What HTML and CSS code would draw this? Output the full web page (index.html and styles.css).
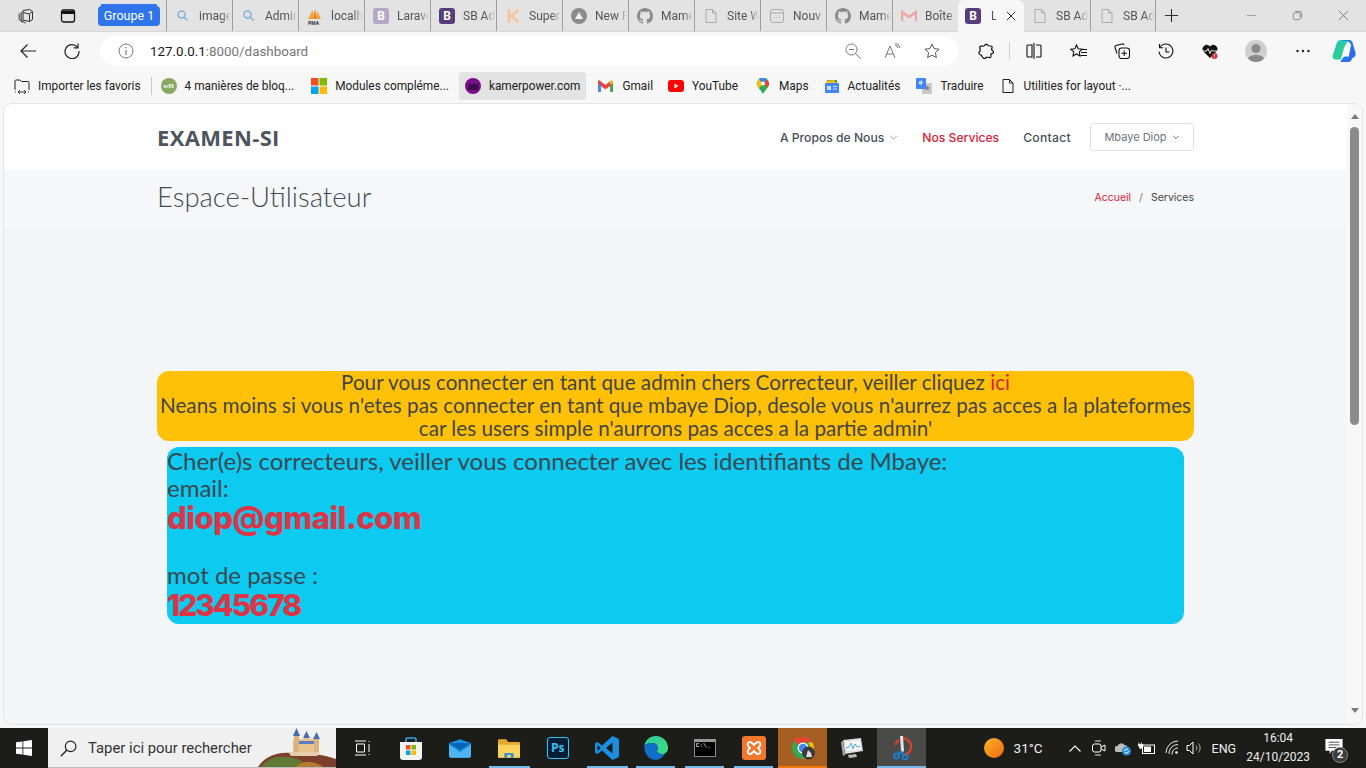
FILE: index.html
```html
<!DOCTYPE html>
<html lang="fr">
<head>
<meta charset="utf-8">
<title>Espace-Utilisateur</title>
<link rel="stylesheet" href="styles.css">
</head>
<body>
<svg class="defs" width="0" height="0" aria-hidden="true">
  <symbol id="doc" viewBox="0 0 16 16"><path d="M3 1.500h6.500L13 5v9.500H3z M9.500 1.500V5H13" fill="none" stroke="currentColor" stroke-width="1"/></symbol>
  <symbol id="gh" viewBox="0 0 16 16"><path fill="currentColor" d="M8 0C3.58 0 0 3.58 0 8c0 3.54 2.29 6.53 5.47 7.59.4.07.55-.17.55-.38 0-.19-.01-.82-.01-1.49-2.01.37-2.53-.49-2.69-.94-.09-.23-.48-.94-.82-1.13-.28-.15-.68-.52-.01-.53.63-.01 1.08.58 1.23.82.72 1.21 1.87.87 2.33.66.07-.52.28-.87.51-1.07-1.78-.2-3.64-.89-3.64-3.95 0-.87.31-1.59.82-2.15-.08-.2-.36-1.02.08-2.12 0 0 .67-.21 2.2.82.64-.18 1.32-.27 2-.27.68 0 1.36.09 2 .27 1.53-1.04 2.2-.82 2.2-.82.44 1.1.16 1.92.08 2.12.51.56.82 1.27.82 2.15 0 3.07-1.87 3.75-3.65 3.95.29.25.54.73.54 1.48 0 1.07-.01 1.93-.01 2.2 0 .21.15.46.55.38A8.013 8.013 0 0016 8c0-4.42-3.58-8-8-8z"/></symbol>
  <symbol id="search" viewBox="0 0 16 16"><circle cx="6.500" cy="6.500" r="3.500" fill="none" stroke="#7fb2de" stroke-width="1.500"/><path d="M9 9l3.500 3.500" stroke="#7fb2de" stroke-width="1.500"/></symbol>
</svg>

<div class="tabbar">
  <div class="win-btns">
    <svg class="ico16" viewBox="0 0 16 16"><path d="M5 2.500l6.500-1 3 2v8l-3 2-6.500-1.500z M3.200 4v8.500l4.500 2.500 M1.200 5.500v6l3.500 3" fill="none" stroke="#333" stroke-width="1"/><path d="M5 4.500l6.500 1.500 3-2.500M11.500 6v7.500" fill="none" stroke="#333" stroke-width="1"/></svg>
    <svg class="ico16" viewBox="0 0 16 16"><rect x="1.500" y="2" width="13" height="12" rx="2" fill="none" stroke="#111" stroke-width="1.300"/><path d="M1.500 4.500h13" stroke="#111" stroke-width="3"/></svg>
  </div>
  <div class="group-chip">Groupe 1</div>
  <div class="tabs">
    <div class="tab"><svg class="fav" viewBox="0 0 16 16"><use href="#search"/></svg><span class="tab-t">images</span></div>
    <div class="tab"><svg class="fav" viewBox="0 0 16 16"><use href="#search"/></svg><span class="tab-t">Admin</span></div>
    <div class="tab"><svg class="fav" viewBox="0 0 16 16"><path d="M1 11L5.500 2l1 5 1.500-6 1.500 6 1-4 3.500 8z" fill="#f3a13c"/><path d="M8 1l-1.500 10h3z" fill="#e7862a"/></svg><span class="pma">PMA</span><span class="tab-t">localhost</span></div>
    <div class="tab"><span class="bs bs-faded">B</span><span class="tab-t">Laravel</span></div>
    <div class="tab"><span class="bs">B</span><span class="tab-t">SB Admin</span></div>
    <div class="tab"><svg class="fav" viewBox="0 0 16 16"><path d="M4 1.500v13" stroke="#f6c79c" stroke-width="3"/><path d="M13.500 1.500L7 8l6.500 6.500" fill="none" stroke="#f6c79c" stroke-width="3"/></svg><span class="tab-t">Super</span></div>
    <div class="tab"><svg class="fav" viewBox="0 0 16 16"><circle cx="8" cy="8" r="8" fill="#8c8c8c"/><path d="M8 4l4 7H4z" fill="#f2f2f2"/></svg><span class="tab-t">New P</span></div>
    <div class="tab tab-gh"><svg class="fav"><use href="#gh"/></svg><span class="tab-t">Mame</span></div>
    <div class="tab tab-dc"><svg class="fav"><use href="#doc"/></svg><span class="tab-t">Site W</span></div>
    <div class="tab"><svg class="fav" viewBox="0 0 16 16"><rect x="1.500" y="1.500" width="13" height="13" rx="2.500" fill="none" stroke="#aaa"/><path d="M1.500 5h13M5 9.500h1M7.500 9.500h1M10 9.500h1" stroke="#aaa"/></svg><span class="tab-t">Nouv</span></div>
    <div class="tab tab-gh"><svg class="fav"><use href="#gh"/></svg><span class="tab-t">Mame</span></div>
    <div class="tab"><svg class="fav" viewBox="0 0 16 16"><path d="M1 13V4l7 5 7-5v9" fill="none" stroke="#e9a9a3" stroke-width="2.500"/></svg><span class="tab-t">Boîte</span></div>
    <div class="tab tab-active"><span class="bs">B</span><span class="tab-t tab-t-short">L</span><svg class="tab-x" viewBox="0 0 10 10"><path d="M1 1l8 8M9 1L1 9" stroke="#333" stroke-width="1"/></svg></div>
    <div class="tab tab-dc"><svg class="fav"><use href="#doc"/></svg><span class="tab-t">SB Ad</span></div>
    <div class="tab tab-dc tab-last"><svg class="fav"><use href="#doc"/></svg><span class="tab-t">SB Ad</span></div>
  </div>
  <svg class="plus" viewBox="0 0 16 16"><path d="M8 1v14M1 8h14" stroke="#333" stroke-width="1.200"/></svg>
  <div class="win-ctl">
    <svg class="ctl" viewBox="0 0 12 12"><path d="M1 6h10" stroke="#999" stroke-width="1"/></svg>
    <svg class="ctl" viewBox="0 0 12 12"><rect x="1.500" y="3" width="7.500" height="7.500" rx="1.500" fill="none" stroke="#888"/><path d="M3.500 1.500h5.500a1.500 1.500 0 011.500 1.500v5.500" fill="none" stroke="#888"/></svg>
    <svg class="ctl" viewBox="0 0 12 12"><path d="M1 1l10 10M11 1L1 11" stroke="#777" stroke-width="1"/></svg>
  </div>
</div>

<div class="toolbar">
  <svg class="tb-ico tb-back" viewBox="0 0 16 16"><path d="M16 8H1M7.500 1.500L1 8l6.500 6.500" fill="none" stroke="#222" stroke-width="1.200"/></svg>
  <svg class="tb-ico tb-reload" viewBox="0 0 16 16"><path d="M13.500 4.300A7 7 0 1015 8" fill="none" stroke="#222" stroke-width="1.200"/><path d="M14 .5v4.300H9.700" fill="none" stroke="#222" stroke-width="1.200"/></svg>
  <div class="address">
    <svg class="tb-ico addr-info" viewBox="0 0 16 16"><circle cx="8" cy="8" r="7" fill="none" stroke="#777" stroke-width="1"/><path d="M8 7v5" stroke="#777" stroke-width="1.200"/><circle cx="8" cy="4.800" r=".8" fill="#777"/></svg>
    <div class="url"><span class="url-host">127.0.0.1</span>:8000/dashboard</div>
    <svg class="tb-ico addr-zoom" viewBox="0 0 16 16"><circle cx="6.500" cy="6.500" r="5.500" fill="none" stroke="#777"/><path d="M10.500 10.500l5 5M4 6.500h5" stroke="#777"/></svg>
    <svg class="tb-ico addr-read" viewBox="0 0 16 16"><path d="M0 15L5 3l5 12M2 11h6" fill="none" stroke="#777"/><path d="M10 2a4 4 0 013 3M10 0a6 6 0 015 5" fill="none" stroke="#777"/></svg>
    <svg class="tb-ico addr-star" viewBox="0 0 16 16"><path d="M8 1l2.100 4.600 5 .6-3.700 3.400 1 5L8 12.100l-4.400 2.500 1-5L.9 6.200l5-.6z" fill="none" stroke="#555"/></svg>
  </div>
  <svg class="tb-ico tb-ext" viewBox="0 0 16 16"><path d="M6.500 2.500a2 2 0 013.500 0c.5 1 3.500 0 4 1s-.5 2.500-.5 3 2.500 1.500 2 3-2 1-2.500 1.500.5 3-.5 3.500-3-.5-3.500-.5-1.500 1.500-3 1.500S4 13 3.500 12.500 .8 11.500 .8 10s1.500-1.500 1.500-2.500S1 4.500 2 3.500s3.500 .5 4.500-1z" fill="none" stroke="#111" stroke-width="1.200"/></svg>
  <span class="tb-sep"></span>
  <svg class="tb-ico tb-split" viewBox="0 0 16 16"><path d="M6 2H2a1 1 0 00-1 1v10a1 1 0 001 1h4zM10 2h4a1 1 0 011 1v10a1 1 0 01-1 1h-4M8 0v16" fill="none" stroke="#111" stroke-width="1.100"/></svg>
  <svg class="tb-ico tb-fav" viewBox="0 0 17 16"><path d="M6.500 2l1.700 3.700 4 .5-3 2.700.8 4-3.500-2-3.500 2 .8-4-3-2.700 4-.5z" fill="none" stroke="#111" stroke-width="1.100"/><path d="M12 6.500h5M11 9.500h6M10.500 12.500h6.500" stroke="#111"/></svg>
  <svg class="tb-ico tb-col" viewBox="0 0 16 16"><path d="M3 10.500L1 4.500a1.500 1.500 0 011-2l6-1.500a1.500 1.500 0 012 1" fill="none" stroke="#111" stroke-width="1.100"/><rect x="5" y="5" width="10.500" height="10.500" rx="2.500" fill="none" stroke="#111" stroke-width="1.100"/><path d="M10.200 7.500v5.500M7.500 10.200h5.500" stroke="#111" stroke-width="1.100"/></svg>
  <svg class="tb-ico tb-hist" viewBox="0 0 16 16"><path d="M1.800 4.500A7 7 0 118.500 15 7 7 0 011 8.500" fill="none" stroke="#111" stroke-width="1.100"/><path d="M1.500 1v3.800h3.800M8 4.500V9h3.500" fill="none" stroke="#111" stroke-width="1.100"/></svg>
  <svg class="tb-ico tb-heart" viewBox="0 0 16 16"><path d="M8 15L1.500 8.500A4 4 0 018 3.500a4 4 0 016.500 5z" fill="#111"/><path d="M0 8h4.500l1.500-2.500 2 5 1.500-3.500 1 1H16" fill="none" stroke="#fff" stroke-width=".9"/><circle cx="12.500" cy="13" r="3" fill="#d13438"/><path d="M12.500 11.300v2M12.500 14v.6" stroke="#fff" stroke-width=".8"/></svg>
  <div class="avatar"><svg viewBox="0 0 22 22"><circle cx="11" cy="8.500" r="4.500" fill="#8a8a8a"/><path d="M3 22v-2.500c0-3 3.500-4.500 8-4.500s8 1.500 8 4.500V22z" fill="#8a8a8a"/></svg></div>
  <svg class="tb-ico tb-dots" viewBox="0 0 16 16"><circle cx="2.500" cy="8" r="1.200" fill="#222"/><circle cx="8" cy="8" r="1.200" fill="#222"/><circle cx="13.500" cy="8" r="1.200" fill="#222"/></svg>
  <svg class="copilot" viewBox="0 0 24 24"><defs><linearGradient id="cp1" x1="0" y1="0" x2="1" y2="1"><stop offset="0" stop-color="#1dc7c2"/><stop offset="1" stop-color="#3ccf7a"/></linearGradient><linearGradient id="cp2" x1="0" y1="0" x2="1" y2="1"><stop offset="0" stop-color="#0e8ff0"/><stop offset="1" stop-color="#3a5ff0"/></linearGradient></defs><path d="M9 1h8c2.500 0 3 1 4 4l2.500 9c.6 2.500-1 5-4 5h-3L19 6c-.6-2-2-3.500-4-3.500H9z" fill="url(#cp2)"/><path d="M9 1C6 1 5 3 4.500 5L.8 16c-.8 2.500.7 4.500 3 4.500h5L12 9c.6-2 2-3.500 3.500-6.500z" fill="url(#cp1)"/><path d="M8 23h8c2.500 0 3.500-1.500 4.500-4.500l.8-3c-1 1.500-2.500 2-4 2h-4c-2 0-3 2-5 5.500z" fill="url(#cp2)"/></svg>
</div>

<div class="bookmarks">
  <div class="bm"><svg class="bm-ico" viewBox="0 0 16 16"><path d="M1 12V3a1 1 0 011-1h4l1.500 1.500H14a1 1 0 011 1V12" fill="none" stroke="#222"/><path d="M4.500 14h7M1 14h1M14 14h1M6 12l-2 2 2 2M10 12l2 2-2 2" fill="none" stroke="#222" stroke-width=".9"/></svg>Importer les favoris</div>
  <span class="bm-sep"></span>
  <div class="bm"><span class="wh">wH</span>4 manières de bloq...</div>
  <div class="bm bm-item-ms"><svg class="bm-ico" viewBox="0 0 16 16"><rect width="7.500" height="7.500" fill="#f25022"/><rect x="8.500" width="7.500" height="7.500" fill="#7fba00"/><rect y="8.500" width="7.500" height="7.500" fill="#00a4ef"/><rect x="8.500" y="8.500" width="7.500" height="7.500" fill="#ffb900"/></svg>Modules compléme...</div>
  <div class="bm bm-active"><svg class="bm-ico" viewBox="0 0 16 16"><circle cx="8" cy="8" r="8" fill="#7a0f8c"/><path d="M3 12V7l2-2 2 2 2-2 2 2 2-2v7z" fill="#3d0a50"/></svg>kamerpower.com</div>
  <div class="bm bm-item-gm"><svg class="bm-ico bm-gmail" viewBox="0 0 16 12"><path d="M0 12V2l8 5.500L16 2v10h-3V6L8 9.500 3 6v6z" fill="#ea4335"/><path d="M0 2.500V12h3V5z" fill="#4285f4"/><path d="M16 2.500V12h-3V5z" fill="#34a853"/><path d="M13 5l3-2.500V1c0-1-1-1.300-2-.7L13 1z" fill="#fbbc04"/><path d="M3 5L0 2.500V1c0-1 1-1.300 2-.7L8 5l5-4v4L8 9z" fill="#ea4335"/></svg>Gmail</div>
  <div class="bm bm-item-yt"><svg class="bm-ico" viewBox="0 0 16 12"><rect width="16" height="12" rx="3" fill="#f00"/><path d="M6.500 3.500v5l4-2.500z" fill="#fff"/></svg>YouTube</div>
  <div class="bm bm-item-map"><svg class="bm-ico bm-maps" viewBox="0 0 12 16"><path d="M6 16C4 12 0 9.500 0 5.500a6 6 0 0112 0C12 9.500 8 12 6 16z" fill="#34a853"/><path d="M0 5.500a6 6 0 012-4.400l4 4.400-4 4.700C1 8.800 0 7.400 0 5.500z" fill="#fbbc04"/><path d="M2 1.100A6 6 0 016 0c1.500 0 3 .6 4 1.700L6 5.500z" fill="#4285f4"/><path d="M10 1.700c1.200 1 2 2.300 2 3.800 0 1.500-.8 3-1.600 4L6 5.500z" fill="#ea4335"/><circle cx="6" cy="5.500" r="2.100" fill="#fff"/></svg>Maps</div>
  <div class="bm"><svg class="bm-ico" viewBox="0 0 16 16"><path d="M3 2h10v5H3z" fill="#34a853"/><path d="M2 3l8-1 3 4H3z" fill="#fbbc04"/><rect x="1" y="5" width="14" height="10" rx="1" fill="#4285f4"/><rect x="3" y="8" width="4" height="4" fill="#cfe0fb"/><path d="M9 8.500h4M9 11h4" stroke="#cfe0fb"/></svg>Actualités</div>
  <div class="bm"><svg class="bm-ico" viewBox="0 0 16 16"><rect x="6" y="5" width="10" height="11" fill="#c9c9c9"/><path d="M11 7l1 2h2l-1.500 1.500.5 2-2-1-2 1 .5-2L8 9h2z" fill="#888"/><rect width="10" height="11" rx="1" fill="#4285f4"/><path d="M7 4H5v1.500h1a1.500 1.500 0 11-.5-2.200" fill="none" stroke="#fff"/></svg>Traduire</div>
  <div class="bm"><svg class="bm-ico bm-doc"><use href="#doc"/></svg>Utilities for layout ·...</div>
</div>

<div class="viewport">
  <div class="page">
    <header class="site-head">
      <div class="container head-row">
        <div class="brand">EXAMEN-SI</div>
        <nav class="nav">
          <a class="nav-link">A Propos de Nous <svg class="chev-thin" viewBox="0 0 10 6"><path d="M1 1l4 4 4-4" fill="none" stroke="#777" stroke-width=".8"/></svg></a>
          <a class="nav-link nav-red">Nos Services</a>
          <a class="nav-link nav-contact">Contact</a>
          <button class="user-btn">Mbaye Diop <svg class="chev" viewBox="0 0 10 6"><path d="M1.500 1l3.500 3.500L8.500 1" fill="none" stroke="#555" stroke-width="1.100"/></svg></button>
        </nav>
      </div>
    </header>
    <section class="crumbs">
      <div class="container crumb-row">
        <h1 class="crumb-title">Espace-Utilisateur</h1>
        <div class="crumb-path"><a class="crumb-link">Accueil</a><span class="crumb-sl">/</span><span>Services</span></div>
      </div>
    </section>
    <main class="main container">
      <div class="notice">
        Pour vous connecter en tant que admin chers Correcteur, veiller cliquez <a class="notice-link">ici</a><br>
        Neans moins si vous n'etes pas connecter en tant que mbaye Diop, desole vous n'aurrez pas acces a la plateformes<br>
        car les users simple n'aurrons pas acces a la partie admin'
      </div>
      <div class="creds">
        <div class="creds-line">Cher(e)s correcteurs, veiller vous connecter avec les identifiants de Mbaye:</div>
        <div class="creds-line">email:</div>
        <div class="creds-value">diop@gmail.com</div>
        <div class="creds-line creds-gap">mot de passe :</div>
        <div class="creds-value creds-last">12345678</div>
      </div>
    </main>
  </div>
  <div class="scrollbar">
    <span class="sb-up"></span>
    <span class="sb-thumb"></span>
    <span class="sb-down"></span>
  </div>
</div>

<div class="taskbar">
  <div class="start"><svg viewBox="0 0 16 16"><path d="M0 2.300l6.500-.9v6.200H0zM7.300 1.300L16 0v7.600H7.300zM0 8.400h6.500v6.200L0 13.700zM7.300 8.400H16V16l-8.700-1.200z" fill="#fff"/></svg></div>
  <div class="task-search">
    <svg class="ts-ico" viewBox="0 0 16 16"><circle cx="10" cy="6" r="5" fill="none" stroke="#222" stroke-width="1.100"/><path d="M6.500 9.500L.8 15.200" stroke="#222" stroke-width="1.300"/></svg>
    <span class="ts-text">Taper ici pour rechercher</span>
    <svg class="castle" viewBox="0 0 78 40"><path d="M0 40c5-8 14-13 24-14 14-1 38 0 54 6v8z" fill="#7d3f2c"/><path d="M3 40c6-8 14-11 24-10 8 0 14 2 18 5-4 1-6 3-8 5z" fill="#5f7a34"/><path d="M37 40c4-4 10-6 16-5 6 1 10 3 12 5z" fill="#b5792f"/><path d="M30 25h32l-3 4H33z" fill="#e8cdaa"/><rect x="35" y="12" width="24" height="13" fill="#e6c48f"/><rect x="36" y="9" width="5" height="16" fill="#d9b27c"/><rect x="46" y="11" width="5" height="14" fill="#e6c48f"/><rect x="56" y="12" width="5" height="13" fill="#d9b27c"/><path d="M35 9l3.500-8 3.500 8zM45 11l3.500-7 3.500 7zM55 12l3.500-7 3.500 7z" fill="#4a6bb0"/><rect x="41" y="14" width="15" height="3" fill="#5a7cc0"/></svg>
  </div>
  <div class="task-apps">
    <div class="tk"><svg class="tk-i" viewBox="0 0 16 16"><path d="M1 1h11M1 15h11M2.500 4h8v8h-8zM15 1v1M15 4v8M15 14v1" fill="none" stroke="#fff"/></svg></div>
    <div class="tk"><svg class="tk-store" viewBox="0 0 24 24"><path d="M7 8V3.500C7 2.500 8 2 9 2h6c1 0 2 .5 2 1.500V8" fill="none" stroke="#29a8e8" stroke-width="1.600"/><path d="M1 6h22v15a3 3 0 01-3 3H4a3 3 0 01-3-3z" fill="#f4f4f4"/><rect x="7" y="9" width="4.500" height="4.500" fill="#f25022"/><rect x="12.500" y="9" width="4.500" height="4.500" fill="#7fba00"/><rect x="7" y="14.500" width="4.500" height="4.500" fill="#00a4ef"/><rect x="12.500" y="14.500" width="4.500" height="4.500" fill="#ffb900"/></svg></div>
    <div class="tk"><svg class="tk-mail" viewBox="0 0 24 20"><path d="M0 4L12 0l12 4v14a2 2 0 01-2 2H2a2 2 0 01-2-2z" fill="#1a8ee1"/><path d="M0 4l12 8 12-8" fill="#0a64b4"/><path d="M0 6l12 8 12-8v12a2 2 0 01-2 2H2a2 2 0 01-2-2z" fill="#50b4f0"/></svg></div>
    <div class="tk tk-on tk-on-split"><svg class="tk-mail" viewBox="0 0 24 20"><path d="M1 0h8l2 3h12a1 1 0 011 1v15a1 1 0 01-1 1H1a1 1 0 01-1-1V1a1 1 0 011-1z" fill="#e5a92e"/><path d="M0 6h24v13a1 1 0 01-1 1H1a1 1 0 01-1-1z" fill="#fcd55f"/><path d="M7 15h10v5H7z" fill="#2a8fd8"/><rect x="10" y="17" width="4" height="3" fill="#fcd55f"/></svg></div>
    <div class="tk"><span class="ps">Ps</span></div>
    <div class="tk tk-on tk-on-split"><svg class="tk-i22" viewBox="0 0 24 24"><path d="M17.500 0L24 3v18l-6.500 3L7 14.500 2.500 18 0 16.800V7.200L2.500 6 7 9.500zM17.500 6.500L11 12l6.500 5.500zM2.500 9v6l3-3z" fill="#1b8ee0"/></svg></div>
    <div class="tk tk-on"><svg class="tk-i24" viewBox="0 0 24 24"><defs><linearGradient id="edge1" x1="0" y1="0" x2="1" y2="1"><stop offset="0" stop-color="#2fc7a0"/><stop offset="1" stop-color="#3fe07c"/></linearGradient></defs><path d="M12 0a12 12 0 0112 12c0 4-3 6-6 6-3 0-5-1.500-5-3 0-1 1-1 1-3 0-3-3-5-6-5C4 7 1 9 .3 10 1 4 6 0 12 0z" fill="url(#edge1)"/><path d="M.3 10C2 7.500 5 7 8 7c3 0 6 2 6 5 0 2-1 2-1 3 0 1.500 2 3 5 3 1 0 2 0 3-.5A12 12 0 0112 24C5 24 0 18 .3 10z" fill="#0f6fc6"/></svg></div>
    <div class="tk tk-on"><div class="cmd"><span class="cmd-t">C:\_</span></div></div>
    <div class="tk tk-on"><div class="xampp"><svg viewBox="0 0 16 16"><path d="M4 2c2 0 3 2 4 3 1-1 2-3 4-3s3 2 2 4l-2 2 2 2c1 2 0 4-2 4s-3-2-4-3c-1 1-2 3-4 3s-3-2-2-4l2-2-2-2c-1-2 0-4 2-4z" fill="none" stroke="#fff" stroke-width="1.800"/></svg></div></div>
    <div class="tk tk-chrome"><svg class="tk-i24" viewBox="0 0 24 24"><circle cx="12" cy="12" r="11" fill="#34a853"/><path d="M12 1a11 11 0 019.500 5.500H12a5.500 5.500 0 00-5 3L3 4a11 11 0 019-3z" fill="#ea4335"/><path d="M21.500 6.500A11 11 0 0112 23l5-8.500a5.500 5.500 0 000-8z" fill="#fbbc04"/><circle cx="12" cy="12" r="5.500" fill="#fff"/><circle cx="12" cy="12" r="4.200" fill="#4285f4"/><circle cx="17.500" cy="17" r="6.500" fill="#3a3a3a"/><path d="M15 21l2-7 3 3 1 4z" fill="#ddd"/></svg></div>
    <div class="tk"><svg class="tk-i24" viewBox="0 0 24 24"><path d="M3 4l18-2 2 13-18 3z" fill="#dcdcdc"/><path d="M5 5.500l15-1.500 1.500 9.500-15 2z" fill="#f5f5f5"/><path d="M6 12l3-1 2-4 2 6 2-5 2 3 3-.5" fill="none" stroke="#4aa3df" stroke-width=".9"/><path d="M1 6l2-1 2 14-2 1z" fill="#aaa"/><path d="M8 19l8-1 1 3-8 1z" fill="#bbb"/></svg></div>
    <div class="tk tk-snip"><svg class="tk-i24" viewBox="0 0 24 24"><path d="M14 2a9 9 0 018 10 9 9 0 01-7 7" fill="none" stroke="#d8402a" stroke-width="2.500"/><path d="M10 4a9 9 0 00-4 5" fill="none" stroke="#d8402a" stroke-width="2.500"/><path d="M11 0l3 0 1 15-2 2-1-2z" fill="#e2e2e2"/><circle cx="7.500" cy="20" r="2.500" fill="none" stroke="#1b7fd0" stroke-width="2"/><circle cx="16" cy="21" r="2.500" fill="none" stroke="#1b7fd0" stroke-width="2"/><path d="M9 18l3-3M14 19l-2-4" stroke="#1b7fd0" stroke-width="1.800"/></svg></div>
  </div>
  <div class="tray">
    <span class="sun"></span>
    <span class="temp">31°C</span>
    <svg class="tr-chev" viewBox="0 0 12 7"><path d="M.5 6.500L6 1l5.500 5.500" fill="none" stroke="#fff" stroke-width="1.100"/></svg>
    <svg class="tr-i tr-vid" viewBox="0 0 14 16"><path d="M3 1h6M3 15h6" stroke="#ddd"/><rect x=".5" y="4" width="8.500" height="8" rx="2" fill="none" stroke="#fff"/><path d="M9 7l4-2v6l-4-2" fill="none" stroke="#fff"/></svg>
    <svg class="tr-i tr-cloud" viewBox="0 0 16 16"><path d="M2 12a3 3 0 01.5-6 4 4 0 017-1 3 3 0 013 4v3z" fill="#bbb"/><circle cx="11.500" cy="11" r="4.500" fill="#2a8fe0"/><path d="M9.500 11a2 2 0 013.500-1.300M13.500 11A2 2 0 0110 12.300" fill="none" stroke="#fff"/></svg>
    <svg class="tr-i tr-batt" viewBox="0 0 18 14"><rect x="4.500" y="4" width="12" height="8.500" fill="none" stroke="#fff"/><rect x="6" y="5.500" width="7" height="5.500" fill="#fff"/><path d="M1 1.500v2M3.500 1.500v2M0 3.500h5v2L2.500 8z" stroke="#fff" fill="#fff" stroke-width=".8"/></svg>
    <svg class="tr-i tr-wifi" viewBox="0 0 16 16"><path d="M1 13A12 12 0 0113 1M4 14a9 9 0 019-9.500M7 14.500A6 6 0 0113 8" fill="none" stroke="#fff" stroke-width=".9"/><circle cx="11.500" cy="12.500" r="1.300" fill="#fff"/></svg>
    <svg class="tr-i tr-spk" viewBox="0 0 16 16"><path d="M1 5.500h2.500L7 2v12l-3.500-3.500H1z" fill="none" stroke="#fff"/><path d="M10 5.500a4 4 0 010 5M12.500 3.500a7 7 0 010 9" fill="none" stroke="#aaa"/></svg>
    <span class="lang">ENG</span>
    <div class="clock"><span>16:04</span><span>24/10/2023</span></div>
    <div class="notif"><svg viewBox="0 0 16 14"><path d="M0 0h16v11H6l-2 3v-3H0z" fill="#fff"/><path d="M3 3h10M3 5.500h10M3 8h7" stroke="#333" stroke-width=".8"/></svg><span class="notif-n">2</span></div>
  </div>
</div>
</body>
</html>
```

FILE: styles.css
```css
* { box-sizing: border-box; }
html, body { margin: 0; padding: 0; }
body {
  width: 1366px; height: 768px; overflow: hidden;
  display: flex; flex-direction: column;
  font-family: Roboto, "Liberation Sans", sans-serif;
  background: #f7f7f7;
}
.defs { position: absolute; }
svg { display: block; flex: none; }

/* tab strip */
.tabbar { height: 32px; background: #e3e3e3; display: flex; align-items: center; border-bottom: 1px solid #d6d6d6; }
.win-btns { display: flex; gap: 26px; padding-left: 18px; width: 98px; }
.ico16 { width: 16px; height: 16px; }
.group-chip {
  width: 62px; height: 20px; background: #2f74eb; color: #fff; font-size: 12.5px;
  line-height: 20px; text-align: center; border-radius: 4px; box-shadow: 0 -5px 0 -3px #2f74eb; margin-right: 6px;
}
.tabs { display: flex; height: 31px; }
.tab { width: 66px; height: 31px; display: flex; align-items: center; padding-left: 8px; border-left: 1px solid #a0a0a0; position: relative; overflow: hidden; color: #555; font-size: 12px; }
.tab-last { border-right: 1px solid #a0a0a0; }
.fav { width: 16px; height: 16px; margin-right: 8px; }
.tab-gh { color: #8c8c8c; }
.tab-dc { color: #aaa; }
.tab-t { color: #555; white-space: nowrap; width: 32px; overflow: hidden; -webkit-mask-image: linear-gradient(90deg, #000 70%, transparent); mask-image: linear-gradient(90deg, #000 70%, transparent); }
.tab-t-short { width: auto; }
.pma { position: absolute; left: 9px; top: 20px; font-size: 5px; font-weight: 700; color: #334; }
.bs { width: 16px; height: 16px; border-radius: 3px; background: #563d7c; color: #fff; font-size: 12px; font-weight: 700; line-height: 16px; text-align: center; margin-right: 8px; flex: none; }
.bs-faded { background: #b3a8c6; }
.tab-active { background: #f7f7f7; border-left: 0; border-radius: 6px 6px 0 0; height: 32px; padding-left: 7px; margin-bottom: -1px; }
.tab-active .bs { margin-right: 10px; }
.tab-active + .tab { border-left: 0; }
.tab-x { width: 10px; height: 10px; margin-left: 9px; }
.plus { width: 15px; height: 15px; margin-left: 8px; }
.win-ctl { display: flex; margin-left: auto; padding-right: 17px; gap: 35px; }
.ctl { width: 11px; height: 11px; }

/* toolbar */
.toolbar { height: 39px; display: flex; align-items: center; padding: 0 0 1px 20px; background: #f7f7f7; }
.tb-ico { width: 16px; height: 16px; }
.tb-reload { margin-left: 28px; }
.address { width: 858px; height: 30px; margin-left: 20px; background: #fff; border-radius: 15px; display: flex; align-items: center; padding-left: 18px; }
.url { margin-left: 16px; font-size: 13.4px; color: #767676; width: 695px; white-space: nowrap; }
.url-host { color: #1a1a1a; }
.addr-read { margin-left: 24px; }
.addr-star { margin-left: 23px; }
.tb-ext { margin-left: 20px; }
.tb-sep { width: 1px; height: 18px; background: #cfcfcf; margin-left: 15px; }
.tb-split { margin-left: 16px; }
.tb-fav { margin-left: 28px; width: 17px; }
.tb-col { margin-left: 27px; }
.tb-hist { margin-left: 28px; }
.tb-heart { margin-left: 28px; }
.avatar { width: 22px; height: 22px; border-radius: 50%; background: #cfcfcf; overflow: hidden; margin-left: 27px; }
.tb-dots { margin-left: 28px; }
.copilot { width: 24px; height: 24px; margin-left: 21px; }

/* bookmarks */
.bookmarks { height: 33px; display: flex; align-items: center; gap: 4px; padding: 0 0 3px 8px; background: #f7f7f7; }
.bm { height: 28px; display: flex; align-items: center; padding: 0 6px; font-size: 11.85px; color: #222; white-space: nowrap; border-radius: 4px; }
.bm-ico { width: 16px; height: 16px; margin-right: 8px; }
.bm-gmail { width: 15px; height: 12px; margin-right: 9px; }
.bm-maps { width: 14px; height: 16px; margin-right: 9px; }
.bm-doc { width: 16px; height: 18px; margin-right: 8px; color: #222; }
.bm-item-ms { margin-left: 1px; }
.bm-item-gm { margin-left: 2px; padding-right: 5px; }
.bm-item-yt { padding-right: 8px; }
.bm-item-map { padding-right: 5px; }
.bm-active { background: #e3e3e3; }
.bm-sep { width: 1px; height: 18px; background: #c8c8c8; margin-right: -1px; }
.wh { width: 16px; height: 16px; border-radius: 50%; background: #86a95f; color: #fff; font: 700 7px/16px "Liberation Serif", serif; text-align: center; margin-right: 8px; }

/* browser viewport */
.viewport { width: 1358px; margin-left: 4px; height: 620px; display: flex; background: #f3f5f7; border-radius: 8px; overflow: hidden; box-shadow: 0 0 0 1px #e4e4e4; }
.page { width: 1343px; display: flex; flex-direction: column; }
.container { width: 1037px; margin-left: 153px; }
.site-head { height: 66px; background: #fff; }
.head-row { height: 66px; display: flex; align-items: center; justify-content: space-between; }
.brand { font: 700 22px "Open Sans", sans-serif; color: #4e555c; letter-spacing: .35px; }
.nav { display: flex; align-items: center; gap: 24px; }
.nav-link { font: 500 12.15px Inter, sans-serif; color: #46505a; display: flex; align-items: center; gap: 5px; white-space: nowrap; }
.nav-red { color: #dc2035; }
.nav-contact { letter-spacing: .3px; }
.chev-thin { width: 9px; height: 5px; }
.user-btn { width: 104px; height: 28px; margin-left: -5px; border: 1px solid #dee2e6; border-radius: 4px; background: #fff; font: 400 11px Inter, sans-serif; color: #6c757d; display: flex; align-items: center; justify-content: center; gap: 5px; }
.chev { width: 8px; height: 5px; }
.crumbs { height: 57px; background: #f6f7f9; }
.crumb-row { height: 57px; display: flex; align-items: center; justify-content: space-between; }
.crumb-title { margin: 0 0 4px; font: 300 27.5px Lato, sans-serif; color: #444b52; }
.crumb-path { font: 400 10.5px Inter, sans-serif; color: #444; display: flex; gap: 8px; margin-bottom: 2px; }
.crumb-link { color: #dc2035; }
.crumb-sl { color: #777; }
.main { padding-top: 144px; }
.notice { height: 70px; background: #ffc107; border-radius: 12px; text-align: center; font: 400 20.7px/23px Lato, sans-serif; color: #444; white-space: nowrap; }
.notice-link { color: #dc2035; }
.creds { margin: 6px 10px 0; height: 177px; background: #0dcaf0; border-radius: 12px; color: #3a4750; overflow: hidden; }
.creds-line { font: 400 24px/27px Lato, sans-serif; white-space: nowrap; }
.creds-value { font: 800 31px/34px Inter, sans-serif; color: #dc3545; letter-spacing: -.5px; }
.creds-gap { margin-top: 26px; }
.creds-last { font-size: 30px; line-height: 34px; letter-spacing: -2px; }

/* scrollbar */
.scrollbar { width: 15px; background: #f8f8f8; display: flex; flex-direction: column; align-items: center; padding-top: 10px; }
.sb-up { width: 0; height: 0; border: 4.5px solid transparent; border-top: 0; border-bottom: 5px solid #7a7a7a; }
.sb-thumb { width: 9px; height: 298px; border-radius: 5px; background: #8b8b8b; margin-top: 8px; }
.sb-down { width: 0; height: 0; border: 4.5px solid transparent; border-bottom: 0; border-top: 5px solid #7a7a7a; margin-top: auto; margin-bottom: 11px; }

/* taskbar */
.taskbar { height: 40px; margin-top: 4px; background: #1c1c19; display: flex; color: #fff; }
.start { width: 48px; display: flex; align-items: center; justify-content: center; }
.start svg { width: 16px; height: 16px; }
.task-search { width: 288px; background: #f0f0f0; display: flex; align-items: center; padding: 1px 0 0 12px; position: relative; overflow: hidden; border-bottom: 1px solid #bbb; }
.ts-ico { width: 17px; height: 17px; }
.ts-text { font-size: 14.85px; color: #333; margin-left: 11px; white-space: nowrap; }
.castle { position: absolute; right: 0; bottom: 0; width: 78px; height: 40px; }
.task-apps { display: flex; margin-left: 1px; }
.tk { width: 49.05px; height: 40px; display: flex; align-items: center; justify-content: center; position: relative; }
.tk-on::after, .tk-chrome::after, .tk-snip::after { content: ""; position: absolute; left: 5px; right: 5px; bottom: 0; height: 2px; background: #76b9ed; }
.tk-on-split::after { right: 3px; }
.tk-chrome { background: #a65e22; }
.tk-chrome::after { left: 0; right: 0; background: #f0780f; }
.tk-snip { background: #4a4a48; }
.tk-snip::after { left: 0; right: 0; }
.tk-i { width: 16px; height: 16px; }
.tk-store { width: 24px; height: 24px; }
.tk-mail { width: 22px; height: 19px; }
.tk-i22 { width: 24px; height: 24px; }
.tk-i24 { width: 24px; height: 24px; }
.ps { width: 22px; height: 22px; background: #001d34; border: 1.5px solid #31c5f4; border-radius: 3px; color: #31c5f4; font: 700 12px/19px "Open Sans", sans-serif; text-align: center; }
.cmd { width: 22px; height: 18px; background: #000; border: 1px solid #888; border-top: 3px solid #999; color: #ddd; }
.cmd-t { display: block; font: 700 6px/8px "Liberation Mono", monospace; padding-left: 1px; }
.xampp { width: 24px; height: 24px; background: #f0772b; border-radius: 3px; padding: 4px; }
.tray { display: flex; align-items: center; flex: 1; padding-left: 58px; }
.sun { width: 20px; height: 20px; border-radius: 50%; background: linear-gradient(135deg, #f8b22e, #ef6a0c); }
.temp { margin-left: 10px; font-size: 13.5px; color: #eee; }
.tr-chev { width: 12px; height: 7px; margin-left: 26px; }
.tr-i { width: 16px; height: 16px; }
.tr-vid { margin-left: 11px; width: 14px; }
.tr-cloud { margin-left: 9px; }
.tr-batt { margin-left: 7px; width: 18px; height: 14px; }
.tr-wifi { margin-left: 9px; }
.tr-spk { margin-left: 5px; }
.lang { font-size: 12.5px; margin-left: 10px; color: #eee; }
.clock { display: flex; flex-direction: column; align-items: center; width: 58px; margin-left: 13px; font-size: 12px; line-height: 19px; color: #eee; white-space: nowrap; }
.notif { width: 24px; height: 24px; margin-left: 18px; position: relative; }
.notif svg { width: 18px; height: 15px; margin-top: 3px; }
.notif-n { position: absolute; left: 7px; top: 11px; width: 16px; height: 16px; border-radius: 50%; background: #3c3c3c; border: 1px solid #888; font-size: 11px; line-height: 14px; text-align: center; font-weight: 700; }
```
